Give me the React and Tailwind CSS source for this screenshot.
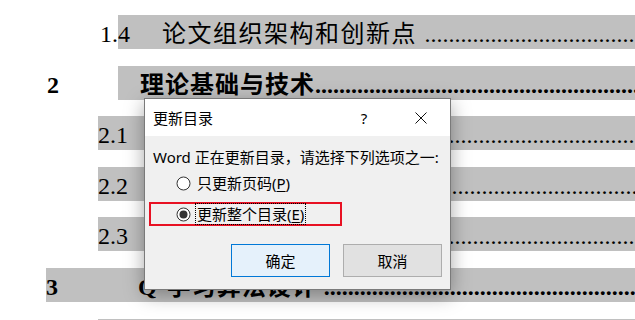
import React from "react";

const DOTS = ".".repeat(160);
const serif = { fontFamily: '"Liberation Serif","Noto Sans CJK SC",serif' };

function Leader({ bold }) {
  return (
    <span className={`flex-1 min-w-0 overflow-hidden whitespace-nowrap ${bold ? "font-bold" : ""}`}>
      {DOTS}
    </span>
  );
}

function Radio({ checked }) {
  return (
    <svg width="15" height="15" viewBox="0 0 15 15" className="shrink-0">
      <circle cx="7.5" cy="7.5" r="6.5" fill="#fff" stroke="#333" strokeWidth="1" />
      {checked && <circle cx="7.5" cy="7.5" r="4" fill="#333" />}
    </svg>
  );
}

export default function App() {
  const band = "flex-1 min-w-0 bg-[#c0c0c0] flex items-start h-[34px] pt-[5px] leading-[28px]";
  return (
    <div
      className="relative w-[635px] h-[320px] overflow-hidden bg-white text-[24px] text-black"
      style={serif}
    >
      <div className="flex flex-col gap-[16.6px] pt-[15px]">
        {/* 1.4 */}
        <div className="flex h-[34px]">
          <span className="shrink-0 w-[118px] pl-[100px] h-[34px] pt-[5px] leading-[28px] whitespace-nowrap">1.</span>
          <div className={band}>
            <span className="shrink-0">4</span>
            <span className="shrink-0 ml-[32px] tracking-[1.5px] whitespace-nowrap">论文组织架构和创新点&nbsp;</span>
            <Leader />
          </div>
        </div>
        {/* 2 */}
        <div className="flex h-[34px]">
          <span className="shrink-0 w-[118px] pl-[47px] h-[34px] pt-[5px] leading-[28px] font-bold">2</span>
          <div className={`${band} pl-[22px] font-bold`}>
            <span className="shrink-0 tracking-[1px] whitespace-nowrap">理论基础与技术</span>
            <Leader bold />
          </div>
        </div>
        {/* 2.1 */}
        <div className="flex h-[34px] pl-[98px]">
          <div className={band}>
            <span className="shrink-0">2.1</span>
            <span className="shrink-0 ml-[34px] tracking-[1.5px] whitespace-nowrap">强化学习概述&nbsp;</span>
            <Leader />
          </div>
        </div>
        {/* 2.2 */}
        <div className="flex h-[34px] pl-[98px]">
          <div className={band}>
            <span className="shrink-0">2.2</span>
            <span className="shrink-0 ml-[34px] tracking-[1.5px] whitespace-nowrap">马尔可夫决策过程&nbsp;</span>
            <Leader />
          </div>
        </div>
        {/* 2.3 */}
        <div className="flex h-[34px] pl-[98px]">
          <div className={band}>
            <span className="shrink-0">2.3</span>
            <span className="shrink-0 ml-[34px] tracking-[1.5px] whitespace-nowrap">相关技术介绍&nbsp;</span>
            <Leader />
          </div>
        </div>
        {/* 3 */}
        <div className="flex h-[34px] pl-[46px]">
          <div className={`${band} font-bold`}>
            <span className="shrink-0 w-[92px]">3</span>
            <span className="shrink-0 tracking-[1px] whitespace-nowrap">Q-学习算法设计&nbsp;</span>
            <Leader bold />
          </div>
        </div>
        {/* 3.1 */}
        <div className="flex h-[34px] pl-[98px]">
          <div className={band}>
            <span className="shrink-0">3.1</span>
          </div>
        </div>
      </div>

      {/* Dialog */}
      <div
        className="absolute left-[144px] top-[98px] w-[307px] h-[192px] border border-[#7a7a7a] bg-[#f0f0f0] shadow-[0_5px_18px_rgba(0,0,0,0.35)] flex flex-col text-[15px]"
        style={{ fontFamily: '"Noto Sans","Noto Sans CJK SC",sans-serif' }}
      >
        <div className="h-[37px] bg-white flex items-center pl-[8px]">
          <span className="flex-1 leading-[18px]">更新目录</span>
          <span className="w-[20px] text-center leading-[18px] mr-[41px]">?</span>
          <svg width="12" height="12" viewBox="0 0 12 12" className="mr-[23px]">
            <path d="M0.5 0.5L11.5 11.5M11.5 0.5L0.5 11.5" stroke="#111" strokeWidth="1" />
          </svg>
        </div>
        <div className="flex flex-col pt-[12px]">
          <div className="pl-[8px] leading-[18px] whitespace-nowrap">
            Word 正在更新目录，请选择下列选项之一:
          </div>
          <div className="mt-[7px] h-[20px] flex items-center pl-[31px]">
            <Radio />
            <span className="ml-[6px] leading-[18px]">
              只更新页码(<span className="underline underline-offset-2">P</span>)
            </span>
          </div>
          <div className="mt-[9px] ml-[4px] w-[193px] h-[24px] border-2 border-[#e81123] flex items-center pl-[25px]">
            <Radio checked />
            <span className="ml-[4px] px-[1px] h-[22px] leading-[20px] border border-dotted border-black whitespace-nowrap">
              更新整个目录(<span className="underline underline-offset-2">E</span>)
            </span>
          </div>
          <div className="mt-[18px] flex justify-end gap-[13px] pr-[8px]">
            <button className="w-[99px] h-[33px] border border-[#0078d7] bg-[#e5f1fb] leading-[18px]">确定</button>
            <button className="w-[99px] h-[33px] border border-[#adadad] bg-[#e1e1e1] leading-[18px]">取消</button>
          </div>
        </div>
      </div>
    </div>
  );
}
